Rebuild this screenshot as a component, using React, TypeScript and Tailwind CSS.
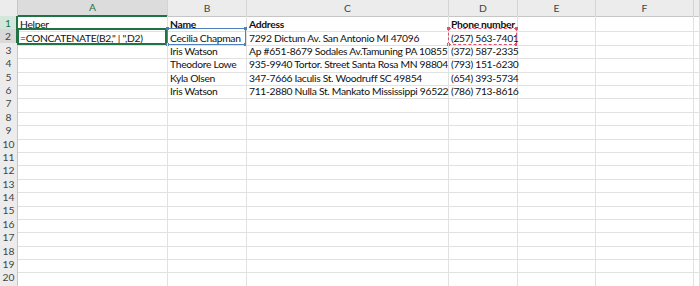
import React from "react";

/**
 * Excel-like sheet: a CONCATENATE helper column being typed into A2,
 * with B2 and D2 highlighted as the formula's references.
 */

const COLS = ["A", "B", "C", "D", "E", "F", ""];
const GRID = "grid grid-cols-[18px_150px_79px_202px_69px_78px_98px_1fr]";

type Row = { a?: string; b?: string; c?: string; d?: string; bold?: boolean };

const rows: Row[] = [
  { a: "Helper", b: "Name", c: "Address", d: "Phone number", bold: true },
  { a: '=CONCATENATE(B2," | ",D2)', b: "Cecilia Chapman", c: "7292 Dictum Av. San Antonio MI 47096", d: "(257) 563-7401" },
  { b: "Iris Watson", c: "Ap #651-8679 Sodales Av.Tamuning PA 10855", d: "(372) 587-2335" },
  { b: "Theodore Lowe", c: "935-9940 Tortor. Street Santa Rosa MN 98804", d: "(793) 151-6230" },
  { b: "Kyla Olsen", c: "347-7666 Iaculis St. Woodruff SC 49854", d: "(654) 393-5734" },
  { b: "Iris Watson", c: "711-2880 Nulla St. Mankato Mississippi 96522", d: "(786) 713-8616" },
];

const Corners = ({ color }: { color: string }) => (
  <>
    <span className={`absolute -left-[2px] -top-[2px] w-[3px] h-[3px] ${color}`} />
    <span className={`absolute -right-[2px] -top-[2px] w-[3px] h-[3px] ${color}`} />
    <span className={`absolute -left-[2px] -bottom-[2px] w-[3px] h-[3px] ${color}`} />
    <span className={`absolute -right-[2px] -bottom-[2px] w-[3px] h-[3px] ${color}`} />
  </>
);

const Cell = ({
  text,
  bold,
  mark,
}: {
  text?: string;
  bold?: boolean;
  mark?: "active" | "blue" | "red";
}) => (
  <div className="relative h-full border-r border-b border-[#e1e1e1] flex items-center pl-[2px] pt-[1px]">
    <span className={`whitespace-nowrap leading-[12px] ${bold ? "font-bold" : ""}`}>{text}</span>
    {mark === "active" && (
      <span className="absolute -left-[1px] -top-[1px] right-0 bottom-0 border-2 border-[#217346]" />
    )}
    {mark === "blue" && (
      <span className="absolute -left-[1px] -top-[1px] right-0 bottom-0 border border-[#4f81bd]">
        <Corners color="bg-[#4f81bd]" />
      </span>
    )}
    {mark === "red" && (
      <span className="absolute -left-[1px] -top-[1px] right-0 bottom-0 border border-dashed border-[#d9546b]">
        <Corners color="bg-[#d9546b]" />
      </span>
    )}
  </div>
);

export default function App() {
  const all: Row[] = Array.from({ length: 20 }, (_, i) => rows[i] ?? {});

  return (
    <div
      className="w-[700px] h-[286px] bg-white overflow-hidden text-[10.3px] tracking-[-0.3px] text-[#111]"
      style={{ fontFamily: "Lato, 'Liberation Sans', sans-serif" }}
    >
      {/* column headers */}
      <div className={`${GRID} h-[16px] bg-[#ececec] text-[#444] tracking-normal`}>
        <div className="border-r border-b border-[#c6c6c6]" />
        {COLS.map((c) => (
          <div
            key={c || "g"}
            className={`flex items-center justify-center border-r border-[#d4d4d4] ${
              c === "A"
                ? "bg-[#dcdcdc] text-[#217346] border-b-2 border-b-[#217346]"
                : "border-b border-b-[#c6c6c6]"
            }`}
          >
            {c}
          </div>
        ))}
      </div>

      {all.map((r, i) => (
        <div key={i} className={`${GRID} h-[13.4px]`}>
          <div
            className={`flex items-center justify-center border-b border-r tracking-normal text-[#444] ${
              i === 0
                ? "bg-[#d3e7da] text-[#217346] border-b-[#c6c6c6] border-r-[#217346] border-r-2"
                : i === 1
                ? "bg-[#d9d9d9] border-b-[#c6c6c6] border-r-[#217346] border-r-2"
                : "bg-[#ececec] border-[#c6c6c6]"
            }`}
          >
            {i + 1}
          </div>
          <Cell text={r.a} mark={i === 1 ? "active" : undefined} />
          <Cell text={r.b} bold={r.bold} mark={i === 1 ? "blue" : undefined} />
          <Cell text={r.c} bold={r.bold} />
          <Cell text={r.d} bold={r.bold} mark={i === 1 ? "red" : undefined} />
          <Cell />
          <Cell />
          <Cell />
        </div>
      ))}
    </div>
  );
}
